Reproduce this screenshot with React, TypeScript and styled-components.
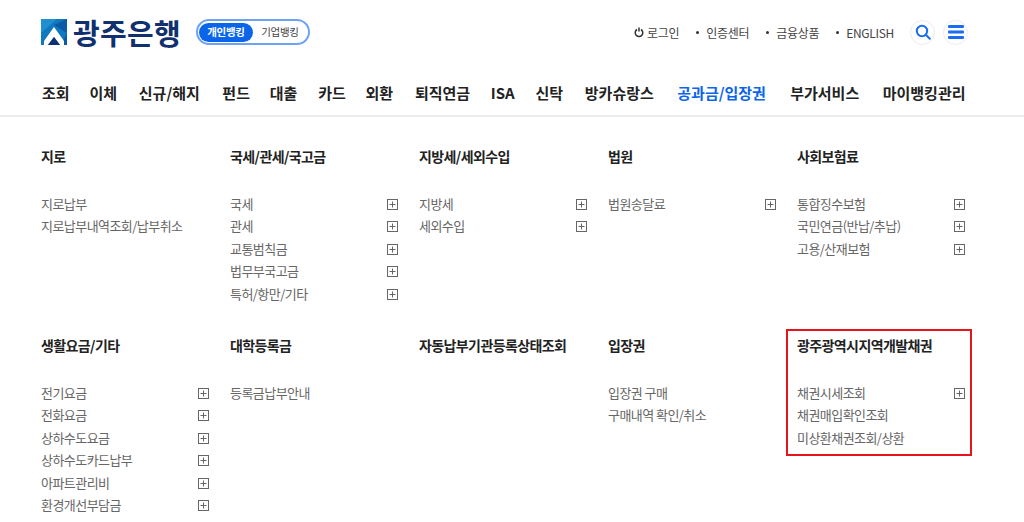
import React from "react";
import styled, { createGlobalStyle } from "styled-components";

const Global = createGlobalStyle`
  html, body { margin: 0; padding: 0; background: #fff; overflow: hidden; height: 522px; }
  body { font-family: "Noto Sans CJK KR", "Noto Sans", sans-serif; }
`;
const Page = styled.div`position: relative; width: 1024px; height: 522px; overflow: hidden;`;
const TopBar = styled.header`display: flex; align-items: center; height: 64px; padding: 0 56px 0 41px;`;
const Logo = styled.div`display: flex; align-items: center; gap: 6px;`;
const LogoText = styled.span`font-size: 29px; font-weight: 700; color: #10306f; letter-spacing: 0.3px; line-height: 30px;`;
const Toggle = styled.div`display: flex; align-items: center; margin-left: 15px; width: 114px; height: 26px; box-sizing: border-box; border: 2px solid #6ea2f4; border-radius: 13px; padding: 1px;`;
const ToggleItem = styled.span<{ $on?: boolean }>`
  flex: ${p => (p.$on ? "0 0 54px" : "1")}; height: 19px; line-height: 18px; text-align: center; border-radius: 10px;
  font-size: 10.5px; letter-spacing: -0.3px; font-weight: ${p => (p.$on ? 700 : 400)};
  background: ${p => (p.$on ? "#0a65ea" : "transparent")}; color: ${p => (p.$on ? "#fff" : "#444")};
`;
const Util = styled.div`display: flex; align-items: center; gap: 17px; margin-left: auto;`;
const UtilLink = styled.span<{ $dot?: boolean }>`
  display: flex; align-items: center; gap: 3px; font-size: 12px; color: #444; letter-spacing: -0.3px;
  ${p => p.$dot ? `&::before { content: ""; width: 3px; height: 3px; border-radius: 50%; background: #333; margin-right: 4px; }` : ""}
`;
const RoundGroup = styled.div`display: flex; gap: 8px; margin-left: -1px;`;
const Round = styled.span`display: flex; align-items: center; justify-content: center; box-sizing: border-box; width: 25px; height: 25px; border-radius: 50%; border: 1px solid #ececf0; color: #1a6df0;`;
const Nav = styled.nav`display: flex; align-items: center; height: 53px; padding: 5px 0 0 42px; box-sizing: border-box; border-bottom: 2px solid #ececec;`;
const NavItem = styled.span<{ $on?: boolean; $gap: number }>`font-size: 15px; font-weight: 700; margin-right: ${p => p.$gap}px; color: ${p => (p.$on ? "#0a65ea" : "#222")}; white-space: nowrap;`;
const Grid = styled.main`display: grid; grid-template-columns: repeat(5, 168px); column-gap: 21px; padding: 28px 0 0 41px;`;
const Col = styled.section`height: 189px;`;
const Heading = styled.h3`margin: 0 0 25.4px; font-size: 14px; line-height: 22px; font-weight: 700; color: #222; letter-spacing: -0.6px; white-space: nowrap;`;
const List = styled.ul`margin: 0; padding: 0; list-style: none;`;
const Row = styled.li`display: flex; justify-content: space-between; align-items: center; height: 22.4px; font-size: 13px; color: #666; letter-spacing: -0.55px; white-space: nowrap;`;
const Plus = styled.svg`width: 11px; height: 11px; flex: none; margin-top: 2px;`;
const Highlight = styled.div`position: absolute; left: 786px; top: 329px; width: 186px; height: 127px; box-sizing: border-box; border: 2px solid #e8141c;`;

const PlusIcon = () => (
  <Plus viewBox="0 0 11 11" fill="none" stroke="#666">
    <rect x="0.5" y="0.5" width="10" height="10" />
    <path d="M5.5 2.5v6M2.5 5.5h6" />
  </Plus>
);

const nav: [string, number][] = [["조회",19.8],["이체",21.8],["신규/해지",22.5],["펀드",19.8],["대출",20.8],["카드",19.8],["외환",21.8],["퇴직연금",20.6],["ISA",20.7],["신탁",21.8],["방카슈랑스",23.5],["공과금/입장권",24.3],["부가서비스",23.5],["마이뱅킹관리",0]];
type Item = [string, boolean];
const p = (s: string): Item => [s, true];
const n = (s: string): Item => [s, false];
const cols: { title: string; items: Item[] }[] = [
  { title: "지로", items: [n("지로납부"), n("지로납부내역조회/납부취소")] },
  { title: "국세/관세/국고금", items: ["국세","관세","교통범칙금","법무부국고금","특허/항만/기타"].map(p) },
  { title: "지방세/세외수입", items: ["지방세","세외수입"].map(p) },
  { title: "법원", items: [p("법원송달료")] },
  { title: "사회보험료", items: ["통합징수보험","국민연금(반납/추납)","고용/산재보험"].map(p) },
  { title: "생활요금/기타", items: ["전기요금","전화요금","상하수도요금","상하수도카드납부","아파트관리비","환경개선부담금"].map(p) },
  { title: "대학등록금", items: [n("등록금납부안내")] },
  { title: "자동납부기관등록상태조회", items: [] },
  { title: "입장권", items: [n("입장권 구매"), n("구매내역 확인/취소")] },
  { title: "광주광역시지역개발채권", items: [p("채권시세조회"), n("채권매입확인조회"), n("미상환채권조회/상환")] },
];

export default function App() {
  return (
    <Page>
      <Global />
      <TopBar>
        <Logo>
          <svg width="26" height="26" viewBox="0 0 26 26">
            <rect width="26" height="26" fill="#0f78c0" />
            <path d="M0 0h16L0 14z" fill="#1f8fd0" />
            <path d="M26 0v14L13 6z" fill="#0a5aa6" />
            <path d="M26 14v12h-6z" fill="#0a5aa6" />
            <path d="M3 26v-4L13 8l10 14v4h-4L13 18l-6 8z" fill="#fff" />
            <path d="M7 26l6-8 6 8z" fill="#10306f" />
          </svg>
          <LogoText>광주은행</LogoText>
        </Logo>
        <Toggle>
          <ToggleItem $on>개인뱅킹</ToggleItem>
          <ToggleItem>기업뱅킹</ToggleItem>
        </Toggle>
        <Util>
          <UtilLink>
            <svg width="10" height="11" viewBox="0 0 10 11" fill="none" stroke="#333" strokeWidth="1.5">
              <path d="M3 2.5a3.8 3.8 0 1 0 4 0M5 .5v4" />
            </svg>
            로그인
          </UtilLink>
          <UtilLink $dot>인증센터</UtilLink>
          <UtilLink $dot>금융상품</UtilLink>
          <UtilLink $dot>ENGLISH</UtilLink>
          <RoundGroup>
            <Round>
              <svg width="16" height="16" viewBox="0 0 16 16" fill="none" stroke="currentColor" strokeWidth="2">
                <circle cx="7" cy="7" r="5.2" /><path d="M10.8 10.8l4 4" strokeLinecap="round" />
              </svg>
            </Round>
            <Round>
              <svg width="16" height="14" viewBox="0 0 16 14" fill="currentColor">
                <rect x="0" y="0" width="16" height="3" rx="1" />
                <rect x="0" y="5.5" width="16" height="3" rx="1" />
                <rect x="0" y="11" width="16" height="3" rx="1" />
              </svg>
            </Round>
          </RoundGroup>
        </Util>
      </TopBar>
      <Nav>
        {nav.map(([t, g]) => <NavItem key={t} $gap={g} $on={t === "공과금/입장권"}>{t}</NavItem>)}
      </Nav>
      <Grid>
        {cols.map(c => (
          <Col key={c.title}>
            <Heading>{c.title}</Heading>
            <List>
              {c.items.map(([t, plus]) => (
                <Row key={t}>{t}{plus && <PlusIcon />}</Row>
              ))}
            </List>
          </Col>
        ))}
      </Grid>
      <Highlight />
    </Page>
  );
}
